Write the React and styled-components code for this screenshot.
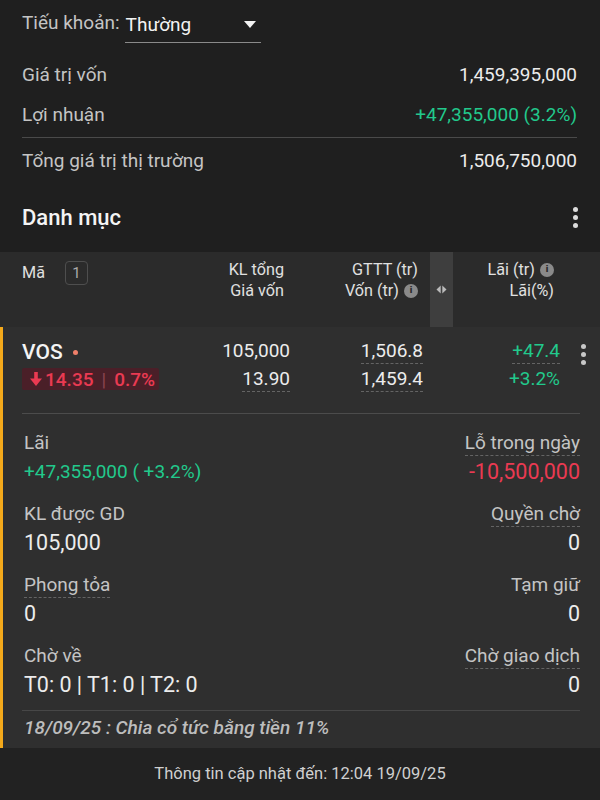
import React from "react";
import styled, { createGlobalStyle } from "styled-components";

const Global = createGlobalStyle`
  html, body { margin: 0; padding: 0; background: #1f1f1f; }
  body { font-family: Roboto, "Noto Sans", "Liberation Sans", sans-serif; color: #e6e6e6; }
  * { box-sizing: border-box; }
`;

const C = {
  label: "#c4c4c4",
  value: "#ececec",
  green: "#22c98c",
  red: "#ea3a52",
  orange: "#f4a91b",
};

const Page = styled.div`
  width: 600px;
  height: 800px;
  display: flex;
  flex-direction: column;
  background: #1f1f1f;
  overflow: hidden;
`;

const Summary = styled.section`
  padding: 0 23px 0 22px;
`;

const AccountRow = styled.div`
  display: flex;
  align-items: center;
  height: 44px;
  font-size: 19px;
  color: ${C.label};
`;

const Select = styled.div`
  margin-left: 5px;
  width: 136px;
  height: 32px;
  margin-top: 10px;
  display: flex;
  align-items: center;
  justify-content: space-between;
  padding: 0 5px 4px 1px;
  border-bottom: 1px solid #8a8a8a;
  color: #f2f2f2;
  font-size: 19px;
`;

const Caret = styled.span`
  width: 0;
  height: 0;
  border-left: 6.5px solid transparent;
  border-right: 6.5px solid transparent;
  border-top: 7px solid #f2f2f2;
`;

const StatList = styled.div`
  padding-top: 10px;
`;

const StatRow = styled.div`
  display: flex;
  justify-content: space-between;
  align-items: center;
  height: ${(p) => p.$h || 40}px;
  font-size: 19px;
  color: ${C.label};
`;

const StatValue = styled.span`
  color: ${(p) => p.$color || C.value};
`;

const Divider = styled.div`
  height: 1px;
  background: ${(p) => p.$color || "#555"};
  margin: ${(p) => p.$m || "0"};
`;

const TitleRow = styled.div`
  display: flex;
  align-items: center;
  justify-content: space-between;
  height: 70px;
  padding: 0 20px 0 22px;
`;

const Title = styled.h2`
  margin: 0;
  font-size: 22px;
  font-weight: 500;
  color: #f4f4f4;
`;

const Kebab = styled.span`
  display: inline-flex;
  flex-direction: column;
  gap: 3px;
  padding: 2px;
  & > i {
    width: 5px;
    height: 5px;
    border-radius: 50%;
    background: ${(p) => p.$color || "#dcdcdc"};
  }
`;

const KebabIcon = ({ color }) => (
  <Kebab $color={color}>
    <i />
    <i />
    <i />
  </Kebab>
);

const TableHead = styled.div`
  display: grid;
  grid-template-columns: 168px 100px 134px 6px 23px 101px 1fr;
  height: 75px;
  background: #2b2b2b;
  padding-left: 22px;
  font-size: 16.2px;
  color: #e0e0e0;
`;

const HeadCell = styled.div`
  display: flex;
  flex-direction: column;
  align-items: ${(p) => (p.$left ? "flex-start" : "flex-end")};
  padding-top: 7px;
  line-height: 21px;
  padding-right: ${(p) => p.$pr || 0}px;
`;

const HeadLine = styled.span`
  display: inline-flex;
  align-items: center;
  gap: 5px;
  white-space: nowrap;
`;

const CountBadge = styled.span`
  display: inline-flex;
  align-items: center;
  justify-content: center;
  width: 23px;
  height: 24px;
  margin-left: 15px;
  margin-top: 2px;
  border: 1.5px solid #4e4e4e;
  border-radius: 4px;
  font-size: 15px;
  color: #aaa;
`;

const Info = styled.span`
  display: inline-flex;
  align-items: center;
  justify-content: center;
  width: 14px;
  height: 14px;
  border-radius: 50%;
  background: #8a8a8a;
  color: #2a2a2a;
  font-size: 9px;
  font-weight: 700;
  font-family: "DejaVu Sans", sans-serif;
  line-height: 1;
`;

const Handle = styled.div`
  background: #3e3e3e;
  display: flex;
  align-items: center;
  justify-content: center;
`;

const Card = styled.div`
  background: #2f2f2f;
  border-left: 3px solid ${C.orange};
  padding: 12px 0 0 19px;
  height: 421px;
`;

const Line = styled.div`
  display: grid;
  grid-template-columns: 171px 97px 133px 137px 40px;
  align-items: start;
`;

const Cell = styled.div`
  display: flex;
  flex-direction: column;
  align-items: ${(p) => (p.$left ? "flex-start" : "flex-end")};
  gap: 3px;
  font-size: 19px;
`;

const Num = styled.span`
  color: ${(p) => p.$color || C.value};
  line-height: 24px;
  border-bottom: 1.5px dashed ${(p) => (p.$dotted ? "rgba(200,200,200,0.35)" : "transparent")};
`;

const Symbol = styled.div`
  display: flex;
  align-items: center;
  gap: 10px;
  font-size: 21px;
  font-weight: 500;
  color: #f4f4f4;
  line-height: 26px;
`;

const Dot = styled.span`
  width: 5px;
  height: 5px;
  border-radius: 50%;
  background: #f0806a;
`;

const ChangeBadge = styled.span`
  display: inline-flex;
  align-items: center;
  gap: 3px;
  height: 22px;
  padding: 0 4px 0 8px;
  background: #4a1f28;
  color: ${C.red};
  font-size: 19px;
  font-weight: 500;
  border-radius: 2px;
`;

const Sep = styled.span`
  color: #8a4650;
  font-weight: 400;
  margin: 0 5px;
`;

const KebabCell = styled.div`
  display: flex;
  justify-content: center;
  padding-top: 3px;
  padding-left: 6px;
`;

const Details = styled.div`
  padding-right: 20px;
`;

const DetailGrid = styled.div`
  display: grid;
  grid-template-columns: 1fr 1fr;
  row-gap: 17px;
  padding: 17px 0 0 2px;
`;

const Field = styled.div`
  display: flex;
  flex-direction: column;
  align-items: ${(p) => (p.$right ? "flex-end" : "flex-start")};
  gap: 3px;
`;

const FieldLabel = styled.span`
  font-size: 19px;
  line-height: 24px;
  color: ${C.label};
  border-bottom: 1.5px dashed ${(p) => (p.$dotted ? "rgba(200,200,200,0.35)" : "transparent")};
`;

const FieldValue = styled.span`
  font-size: ${(p) => p.$size || 21.5}px;
  line-height: 26px;
  color: ${(p) => p.$color || C.value};
`;

const Note = styled.div`
  font-size: 19px;
  font-style: italic;
  font-weight: 500;
  color: #bdbdbd;
  padding: 5px 0 0 2px;
`;

const Footer = styled.footer`
  flex: 1;
  display: flex;
  align-items: center;
  justify-content: center;
  padding-bottom: 2px;
  font-size: 16.5px;
  color: #d0d0d0;
  background: #222;
`;

const HandleIcon = () => (
  <svg width="11" height="9" viewBox="0 0 11 9">
    <path d="M4.7 0.5 L0.5 4.5 L4.7 8.5 Z" fill="#bbb" />
    <path d="M6.3 0.5 L10.5 4.5 L6.3 8.5 Z" fill="#bbb" />
  </svg>
);

const DownArrow = () => (
  <svg width="12" height="15" viewBox="0 0 12 15">
    <rect x="4.2" y="0" width="3.6" height="7.5" fill={C.red} />
    <path d="M0 6.5 L12 6.5 L6 14 Z" fill={C.red} />
  </svg>
);

const details = [
  [{ l: "Lãi", v: "+47,355,000 ( +3.2%)", c: C.green, s: 19 }, { l: "Lỗ trong ngày", v: "-10,500,000", c: C.red, d: true }],
  [{ l: "KL được GD", v: "105,000" }, { l: "Quyền chờ", v: "0", d: true }],
  [{ l: "Phong tỏa", v: "0", d: true }, { l: "Tạm giữ", v: "0" }],
  [{ l: "Chờ về", v: "T0: 0 | T1: 0 | T2: 0" }, { l: "Chờ giao dịch", v: "0", d: true }],
];

export default function App() {
  return (
    <Page>
      <Global />
      <Summary>
        <AccountRow>
          Tiếu khoản:
          <Select>
            Thường
            <Caret />
          </Select>
        </AccountRow>
        <StatList>
          <StatRow>
            <span>Giá trị vốn</span>
            <StatValue>1,459,395,000</StatValue>
          </StatRow>
          <StatRow>
            <span>Lợi nhuận</span>
            <StatValue $color={C.green}>+47,355,000 (3.2%)</StatValue>
          </StatRow>
          <Divider $color="#4a4a4a" $m="3px 0 0 0" />
          <StatRow $h={44}>
            <span>Tổng giá trị thị trường</span>
            <StatValue>1,506,750,000</StatValue>
          </StatRow>
        </StatList>
      </Summary>

      <TitleRow>
        <Title>Danh mục</Title>
        <KebabIcon />
      </TitleRow>

      <TableHead>
        <HeadCell $left>
          <HeadLine>
            Mã
            <CountBadge>1</CountBadge>
          </HeadLine>
        </HeadCell>
        <HeadCell $pr={6}>
          <HeadLine>KL tổng</HeadLine>
          <HeadLine>Giá vốn</HeadLine>
        </HeadCell>
        <HeadCell $pr={6}>
          <HeadLine>GTTT (tr)</HeadLine>
          <HeadLine>
            Vốn (tr) <Info>i</Info>
          </HeadLine>
        </HeadCell>
        <div />
        <Handle>
          <HandleIcon />
        </Handle>
        <HeadCell>
          <HeadLine>
            Lãi (tr) <Info>i</Info>
          </HeadLine>
          <HeadLine>Lãi(%)</HeadLine>
        </HeadCell>
        <div />
      </TableHead>

      <Card>
        <Line>
          <Cell $left>
            <Symbol>
              VOS <Dot />
            </Symbol>
            <ChangeBadge>
              <DownArrow />
              14.35<Sep>|</Sep>0.7%
            </ChangeBadge>
          </Cell>
          <Cell>
            <Num>105,000</Num>
            <Num $dotted>13.90</Num>
          </Cell>
          <Cell>
            <Num $dotted>1,506.8</Num>
            <Num $dotted>1,459.4</Num>
          </Cell>
          <Cell>
            <Num $dotted $color={C.green}>+47.4</Num>
            <Num $color={C.green}>+3.2%</Num>
          </Cell>
          <KebabCell>
            <KebabIcon color="#c8c8c8" />
          </KebabCell>
        </Line>
        <Details>
          <Divider $color="#4c4c4c" $m="21px 0 0 0" />
          <DetailGrid>
            {details.map((row, i) =>
              row.map((f, j) => (
                <Field key={`${i}-${j}`} $right={j === 1}>
                  <FieldLabel $dotted={f.d}>{f.l}</FieldLabel>
                  <FieldValue $color={f.c} $size={f.s}>{f.v}</FieldValue>
                </Field>
              ))
            )}
          </DetailGrid>
          <Divider $color="#474747" $m="12px 0 0 0" />
          <Note>18/09/25 : Chia cổ tức bằng tiền 11%</Note>
        </Details>
      </Card>

      <Footer>Thông tin cập nhật đến: 12:04 19/09/25</Footer>
    </Page>
  );
}
